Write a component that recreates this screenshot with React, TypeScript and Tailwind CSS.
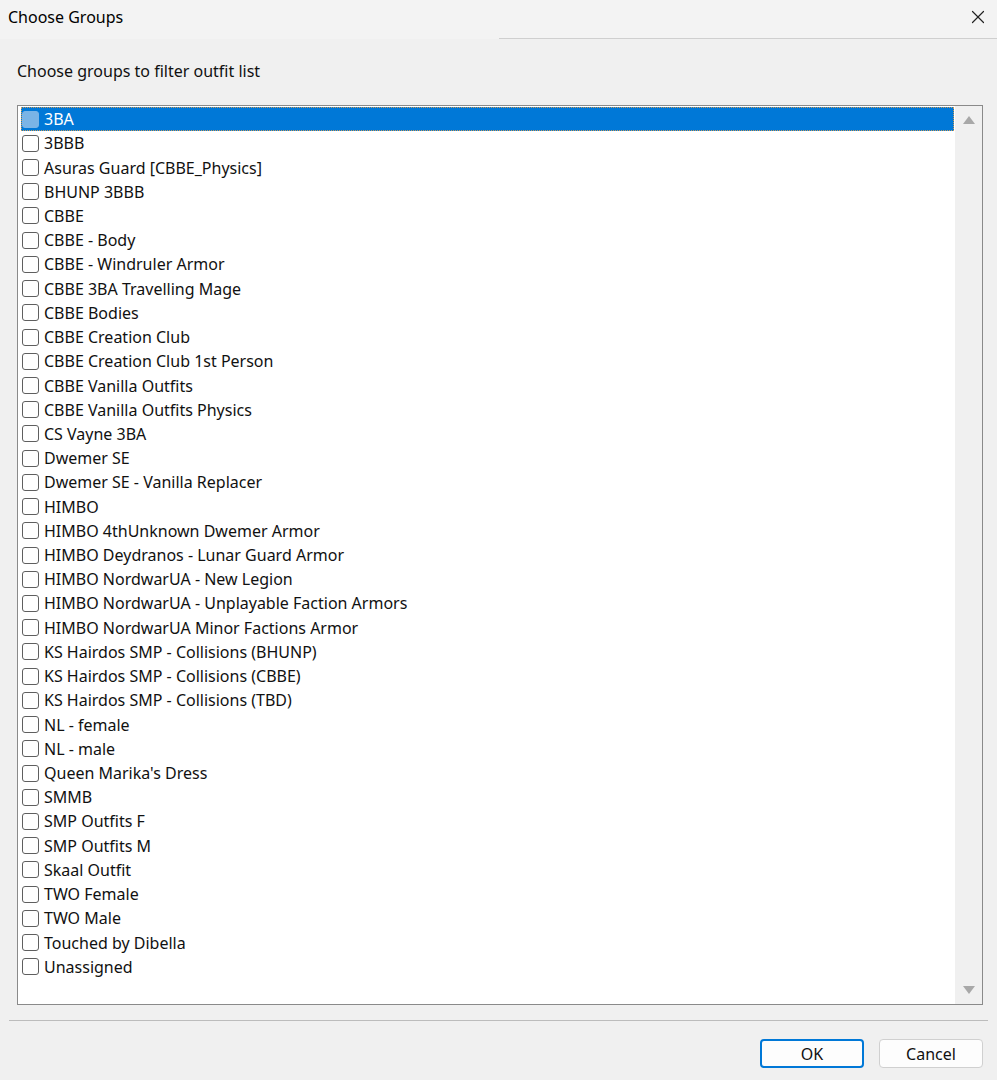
import { X } from "lucide-react";

const groups = [
  "3BA",
  "3BBB",
  "Asuras Guard [CBBE_Physics]",
  "BHUNP 3BBB",
  "CBBE",
  "CBBE - Body",
  "CBBE - Windruler Armor",
  "CBBE 3BA Travelling Mage",
  "CBBE Bodies",
  "CBBE Creation Club",
  "CBBE Creation Club 1st Person",
  "CBBE Vanilla Outfits",
  "CBBE Vanilla Outfits Physics",
  "CS Vayne 3BA",
  "Dwemer SE",
  "Dwemer SE - Vanilla Replacer",
  "HIMBO",
  "HIMBO 4thUnknown Dwemer Armor",
  "HIMBO Deydranos - Lunar Guard Armor",
  "HIMBO NordwarUA - New Legion",
  "HIMBO NordwarUA - Unplayable Faction Armors",
  "HIMBO NordwarUA Minor Factions Armor",
  "KS Hairdos SMP - Collisions (BHUNP)",
  "KS Hairdos SMP - Collisions (CBBE)",
  "KS Hairdos SMP - Collisions (TBD)",
  "NL - female",
  "NL - male",
  "Queen Marika's Dress",
  "SMMB",
  "SMP Outfits F",
  "SMP Outfits M",
  "Skaal Outfit",
  "TWO Female",
  "TWO Male",
  "Touched by Dibella",
  "Unassigned",
];

function Row({ label, selected }: { label: string; selected: boolean }) {
  return (
    <div
      className={`flex items-center h-[24.23px] pl-[1px] ${
        selected
          ? "bg-[#0078d7] text-white outline-1 outline-dotted outline-[#c89a5a] -outline-offset-1"
          : "text-[#111]"
      }`}
    >
      <span
        className={`w-[17px] h-[17px] rounded-[3px] border shrink-0 ${
          selected ? "bg-[#7ab4e6] border-[#7ab4e6]" : "bg-white border-[#5f5f5f]"
        }`}
      />
      <span className="ml-[5px] whitespace-nowrap">{label}</span>
    </div>
  );
}

export default function App() {
  return (
    <div
      className="w-[997px] h-[1080px] bg-[#f0f0f0] flex flex-col text-[16px]"
      style={{ fontFamily: '"Noto Sans", "Open Sans", sans-serif' }}
    >
      <div className="h-[39px] bg-[#f3f3f3] flex items-center justify-between pl-[8px] pr-[8px] pb-[5px] relative shrink-0">
        <span className="text-[16px] text-black">Choose Groups</span>
        <X size={22} strokeWidth={1.3} className="text-[#222]" />
        <div className="absolute left-[499px] right-0 bottom-0 h-px bg-[#cfcfcf]" />
      </div>

      <div className="pl-[17px] pt-[20px] h-[66px] text-[#111] shrink-0">
        Choose groups to filter outfit list
      </div>

      <div className="ml-[17px] w-[966px] h-[900px] border border-[#8a8a8a] bg-white flex shrink-0">
        <div className="flex-1 pt-[1px] pl-[3px] pr-[1px]">
          {groups.map((g, i) => (
            <Row key={g} label={g} selected={i === 0} />
          ))}
        </div>
        <div className="w-[27px] bg-[#f0f0f0] flex flex-col items-center justify-between py-[10px]">
          <svg width="12" height="8" viewBox="0 0 12 8">
            <path d="M6 0 L12 8 L0 8 Z" fill="#a8a8a8" />
          </svg>
          <svg width="12" height="8" viewBox="0 0 12 8">
            <path d="M0 0 L12 0 L6 8 Z" fill="#a8a8a8" />
          </svg>
        </div>
      </div>

      <div className="mx-[9px] mt-[15px] h-px bg-[#bcbcbc] shrink-0" />

      <div className="flex justify-end gap-[15px] pr-[14px] mt-[18px] relative flex-1">
        <button className="w-[104px] h-[29px] rounded-[4px] border-2 border-[#0078d7] bg-[#fdfdfd] text-[#111]">
          OK
        </button>
        <button className="w-[104px] h-[29px] rounded-[4px] border border-[#d0d0d0] bg-[#fdfdfd] text-[#111]">
          Cancel
        </button>
      </div>
    </div>
  );
}
